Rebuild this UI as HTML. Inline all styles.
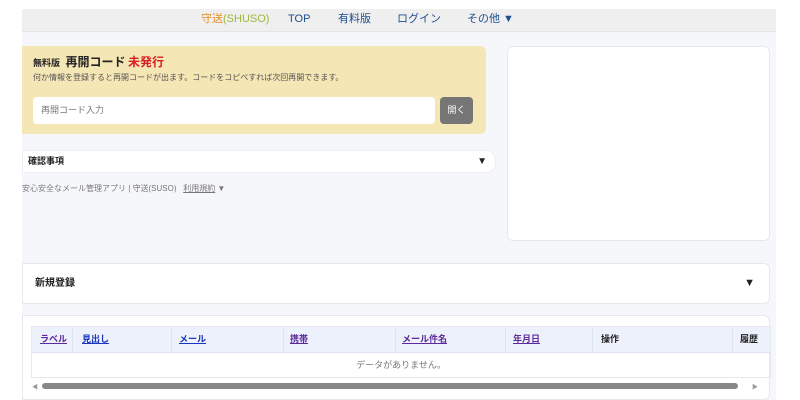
<!DOCTYPE html>
<html><head><meta charset="utf-8"><style>
*{box-sizing:border-box;margin:0;padding:0}
body{width:800px;height:400px;background:#fff;font-family:"Liberation Sans","Noto Sans CJK JP",sans-serif;position:relative;overflow:hidden;color:#222}
.main{position:absolute;left:22px;top:9px;width:754px;height:391px;background:#f6f7fb}
.nav{position:absolute;left:0;top:0;width:754px;height:23px;background:#efefef;border-bottom:1px solid #e4e4e4;font-size:11px;color:#1f4f8f}
.nav>span{position:absolute;top:0;line-height:20px}
.y{position:absolute;left:0;top:37px;width:464px;height:88px;background:#f5e6b5;border-radius:0 6px 6px 0}
.r{position:absolute;left:485px;top:37px;width:263px;height:195px;background:#fff;border:1px solid #e6e8ee;border-radius:6px}
.conf{position:absolute;left:0;top:141px;width:474px;height:23px;background:#fff;border:1px solid #eceef2;border-radius:0 10px 10px 0;font-size:9px;font-weight:bold}
.card{position:absolute;left:0;width:748px;background:#fff;border:1px solid #e6e8ee;border-radius:0 6px 6px 0}
.h span{line-height:12px}
</style></head><body>
<div class="main">
<div class="nav">
<span style="left:179px;color:#e68a1e">守送<span style="color:#9ab83a">(SHUSO)</span></span>
<span style="left:266px">TOP</span>
<span style="left:316px">有料版</span>
<span style="left:375px">ログイン</span>
<span style="left:445px">その他 ▼</span>
</div>
<div class="y">
<div style="position:absolute;left:11px;top:8px;font-size:9px;font-weight:bold;line-height:16px">無料版 <span style="font-size:12px;margin-left:3px">再開コード</span> <span style="font-size:12px;color:#d92020">未発行</span></div>
<div style="position:absolute;left:11px;top:26px;font-size:8px;color:#555;line-height:12px">何か情報を登録すると再開コードが出ます。コードをコピペすれば次回再開できます。</div>
<div style="position:absolute;left:11px;top:51px;width:402px;height:27px;background:#fff;border-radius:4px;font-size:9px;color:#777;padding:0 8px;line-height:27px">再開コード入力</div>
<div style="position:absolute;left:418px;top:51px;width:33px;height:27px;background:#767676;border-radius:4px;color:#fff;font-size:9px;text-align:center;line-height:27px">開く</div>
</div>
<div class="r"></div>
<div class="conf"><span style="position:absolute;left:5px;top:0;line-height:21px">確認事項</span><span style="position:absolute;right:8px;top:0;line-height:21px;font-size:10px">▼</span></div>
<div style="position:absolute;left:0;top:174px;font-size:8px;color:#777;line-height:12px">安心安全なメール管理アプリ | 守送(SUSO) &nbsp; <span style="text-decoration:underline">利用規約</span> ▼</div>
<div class="card" style="top:254px;height:41px"><span style="position:absolute;left:12px;top:0;line-height:39px;font-size:10px;font-weight:bold">新規登録</span><span style="position:absolute;right:14px;top:0;line-height:39px;font-size:11px">▼</span></div>
<div class="card" style="top:306px;height:85px">
<div style="position:absolute;left:8px;top:10px;width:740px;height:52px;border:1px solid #e6e8ee;overflow:hidden">
<div class="h" style="height:26px;background:#edf1fb;border-bottom:1px solid #dde3ef;position:relative;font-size:9px;font-weight:bold">
<span style="position:absolute;left:8px;top:6px;color:#5b2a9b;text-decoration:underline">ラベル</span>
<span style="position:absolute;left:40px;top:0;height:26px;border-left:1px solid #dde3ef"></span>
<span style="position:absolute;left:50px;top:6px;color:#1a35c0;text-decoration:underline">見出し</span>
<span style="position:absolute;left:139px;top:0;height:26px;border-left:1px solid #dde3ef"></span>
<span style="position:absolute;left:147px;top:6px;color:#1a35c0;text-decoration:underline">メール</span>
<span style="position:absolute;left:251px;top:0;height:26px;border-left:1px solid #dde3ef"></span>
<span style="position:absolute;left:258px;top:6px;color:#5b2a9b;text-decoration:underline">携帯</span>
<span style="position:absolute;left:363px;top:0;height:26px;border-left:1px solid #dde3ef"></span>
<span style="position:absolute;left:370px;top:6px;color:#5b2a9b;text-decoration:underline">メール件名</span>
<span style="position:absolute;left:473px;top:0;height:26px;border-left:1px solid #dde3ef"></span>
<span style="position:absolute;left:481px;top:6px;color:#5b2a9b;text-decoration:underline">年月日</span>
<span style="position:absolute;left:560px;top:0;height:26px;border-left:1px solid #dde3ef"></span>
<span style="position:absolute;left:569px;top:6px">操作</span>
<span style="position:absolute;left:700px;top:0;height:26px;border-left:1px solid #dde3ef"></span>
<span style="position:absolute;left:708px;top:6px">履歴</span>
</div>
<div style="text-align:center;font-size:9px;color:#777;line-height:25px">データがありません。</div>
</div>
<div style="position:absolute;left:9px;top:66px;font-size:6px;color:#999">◀</div>
<div style="position:absolute;left:19px;top:67px;width:696px;height:6px;background:#888;border-radius:3px"></div>
<div style="position:absolute;left:729px;top:66px;font-size:6px;color:#999">▶</div>
</div>
</div>
</body></html>
